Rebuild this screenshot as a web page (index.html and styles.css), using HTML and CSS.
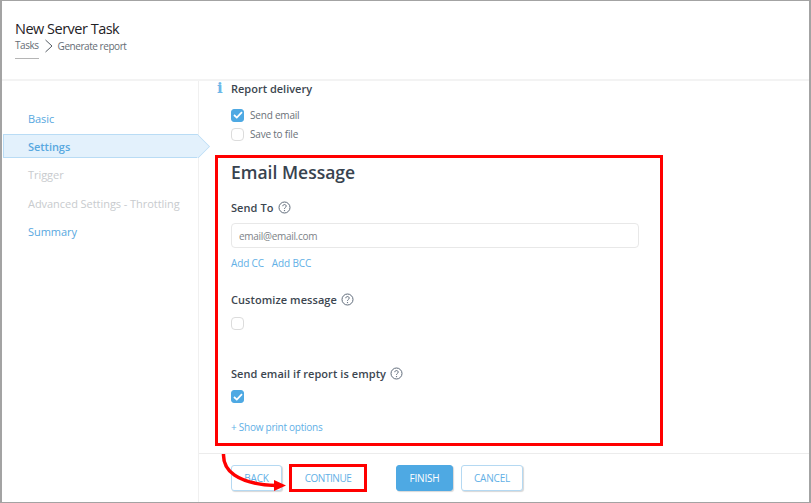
FILE: index.html
```html
<!DOCTYPE html>
<html lang="en">
<head>
  <meta charset="UTF-8" />
  <title>New Server Task</title>
  <link rel="stylesheet" href="styles.css">
</head>
<body>
  <div class="window">
    <header class="header">
      <h1>New Server Task</h1>
      <div class="crumbs">
        <span class="crumb-link">Tasks</span>
        <svg class="crumb-sep" width="10" height="14" viewBox="0 0 10 14" fill="none"><path d="M1.5 1 L8 7 L1.5 13" stroke="#555c63" stroke-width="1"/></svg>
        <span>Generate report</span>
      </div>
    </header>

    <div class="body">
      <nav class="steps">
        <a class="step">Basic</a>
        <a class="step active">Settings</a>
        <a class="step off">Trigger</a>
        <a class="step off">Advanced Settings - Throttling</a>
        <a class="step">Summary</a>
      </nav>

      <div class="panel">
        <main class="content">
          <div class="delivery-title">
            <span class="info">i</span>
            <span>Report delivery</span>
          </div>
          <label class="check-row first">
            <span class="check on"><svg width="10" height="8" viewBox="0 0 10 8" fill="none"><path d="M1 4 L3.8 6.6 L9 1.2" stroke="#fff" stroke-width="1.8"/></svg></span>
            Send email
          </label>
          <label class="check-row">
            <span class="check"></span>
            Save to file
          </label>

          <h2>Email Message</h2>

          <div class="field-label send-to">Send To <svg class="help" width="13" height="13" viewBox="0 0 13 13" fill="none"><circle cx="6.5" cy="6.5" r="5.5" stroke="#5f6b7a"/><path d="M4.8 5.2 C4.8 3 8.2 3 8.2 5.2 C8.2 6.4 6.5 6.4 6.5 7.8" stroke="#5f6b7a"/><circle cx="6.5" cy="9.6" r=".7" fill="#5f6b7a"/></svg></div>
          <input class="text-input" type="text" placeholder="email@email.com">
          <div class="add-links"><a>Add CC</a><a>Add BCC</a></div>

          <div class="field-label customize">Customize message <svg class="help" width="13" height="13" viewBox="0 0 13 13" fill="none"><circle cx="6.5" cy="6.5" r="5.5" stroke="#5f6b7a"/><path d="M4.8 5.2 C4.8 3 8.2 3 8.2 5.2 C8.2 6.4 6.5 6.4 6.5 7.8" stroke="#5f6b7a"/><circle cx="6.5" cy="9.6" r=".7" fill="#5f6b7a"/></svg></div>
          <span class="check solo"></span>

          <div class="field-label empty">Send email if report is empty <svg class="help" width="13" height="13" viewBox="0 0 13 13" fill="none"><circle cx="6.5" cy="6.5" r="5.5" stroke="#5f6b7a"/><path d="M4.8 5.2 C4.8 3 8.2 3 8.2 5.2 C8.2 6.4 6.5 6.4 6.5 7.8" stroke="#5f6b7a"/><circle cx="6.5" cy="9.6" r=".7" fill="#5f6b7a"/></svg></div>
          <span class="check on solo"><svg width="10" height="8" viewBox="0 0 10 8" fill="none"><path d="M1 4 L3.8 6.6 L9 1.2" stroke="#fff" stroke-width="1.8"/></svg></span>

          <a class="print-link">+ Show print options</a>
        </main>

        <footer class="footer">
          <button class="btn back">BACK</button>
          <button class="btn continue">CONTINUE</button>
          <button class="btn primary">FINISH</button>
          <button class="btn">CANCEL</button>
        </footer>
      </div>
    </div>
  </div>

  <!-- red annotations on top of the screenshot -->
  <div class="mark mark-form"></div>
  <div class="mark mark-continue"></div>
  <svg class="mark-arrow" width="70" height="42" viewBox="0 0 70 42" fill="none">
    <path d="M3.5 2 C3 18 16 32 56 33.5" stroke="#f00" stroke-width="3.5"/>
    <path d="M54 28 L66 33.5 L54 39 Z" fill="#f00"/>
  </svg>
</body>
</html>
```

FILE: styles.css
```css
* {
  box-sizing: border-box;
  margin: 0;
  padding: 0;
}
body {
  width: 811px;
  height: 503px;
  background: #fff;
  font-family: 'Open Sans', 'Noto Sans', sans-serif;
  color: #3f4a56;
  overflow: hidden;
  position: relative;
}
.window {
  width: 811px;
  height: 503px;
  border: 1px solid #a3a3a3;
  border-left-width: 2px;
  border-right-width: 2px;
  display: flex;
  flex-direction: column;
}
.header {
  height: 80px;
  padding: 18px 0 0 13px;
  border-bottom: 2px solid #f3f3f3;
}
.header h1 {
  font-size: 14.5px;
  font-weight: 400;
  line-height: 20px;
  letter-spacing: -0.5px;
  color: #1f2226;
}
.crumbs {
  display: flex;
  align-items: center;
  margin-top: -1px;
  font-size: 10px;
  line-height: 14px;
  letter-spacing: -0.45px;
  color: #666d75;
}
.crumb-link {
  padding-bottom: 6px;
  margin-bottom: -6px;
  border-bottom: 1px solid #b5b5b5;
  position: relative;
}
.crumb-sep {
  margin: 0 4px 0 5px;
}
.body {
  flex: 1;
  display: flex;
  min-height: 0;
}
.steps {
  width: 197px;
  padding-top: 25px;
  border-right: 1px solid #f0f0f0;
  flex-shrink: 0;
  position: relative;
}
.step {
  display: flex;
  align-items: center;
  height: 24px;
  margin-bottom: 4.4px;
  padding-left: 26px;
  font-size: 11px;
  letter-spacing: -0.05px;
  color: #58a8e0;
}
.step.off {
  color: #c8cbce;
}
.step.active {
  margin-left: 1px;
  padding-left: 24px;
  font-weight: 600;
  background: #e3f1fc;
  border: 1px solid #b9dcf5;
  border-right: 0;
  position: relative;
}
.step.active::before,
.step.active::after {
  content: "";
  position: absolute;
  top: -1px;
  width: 12px;
  height: 24px;
  clip-path: polygon(0 0, 100% 50%, 0 100%);
}
.step.active::before {
  right: -12px;
  background: #b9dcf5;
}
.step.active::after {
  right: -11px;
  background: #e3f1fc;
}
.panel {
  flex: 1;
  display: flex;
  flex-direction: column;
  min-width: 0;
}
.content {
  flex: 1;
  padding: 0 0 0 32px;
  min-height: 0;
}
.delivery-title {
  display: flex;
  align-items: center;
  height: 16px;
  margin-top: -1px;
  font-size: 11px;
  font-weight: 600;
  color: #3c4650;
  position: relative;
}
.info {
  position: absolute;
  left: -14px;
  font-family: 'DejaVu Serif', serif;
  font-size: 15px;
  font-weight: 700;
  color: #6db7e8;
}
.check-row {
  display: flex;
  align-items: center;
  gap: 6px;
  height: 14px;
  margin-top: 5px;
  font-size: 10px;
  letter-spacing: -0.2px;
  color: #6a7178;
}
.check-row.first {
  margin-top: 12px;
}
.check {
  display: flex;
  align-items: center;
  justify-content: center;
  width: 13px;
  height: 13px;
  border: 1px solid #dcdcdc;
  border-radius: 4px;
  background: #fff;
}
.check.on {
  background: #4ea9e3;
  border-color: #4ea9e3;
  border-radius: 3px;
}
.check.solo {
  margin-top: 10px;
}
h2 {
  font-size: 17.5px;
  font-weight: 600;
  line-height: 24px;
  margin-top: 19px;
  color: #38434f;
}
.field-label {
  display: flex;
  align-items: center;
  gap: 4px;
  height: 16px;
  font-size: 11px;
  font-weight: 600;
  letter-spacing: 0.07px;
  color: #3c4650;
}
.send-to {
  margin-top: 15px;
}
.customize {
  margin-top: 20px;
}
.empty {
  margin-top: 35px;
}
.empty + .check.solo {
  margin-top: 9px;
}
.text-input {
  display: block;
  width: 408px;
  height: 25px;
  margin-top: 8px;
  padding: 0 7px;
  border: 1px solid #e8e8e8;
  border-radius: 4px;
  font-family: inherit;
  font-size: 10px;
  letter-spacing: -0.3px;
}
.text-input::placeholder {
  color: #7d8388;
  opacity: 1;
}
.add-links {
  display: flex;
  gap: 8px;
  margin-top: 8px;
  line-height: 15px;
  font-size: 10px;
  letter-spacing: -0.15px;
  color: #62b0e6;
}
.print-link {
  display: block;
  margin-top: 17px;
  line-height: 15px;
  font-size: 10px;
  letter-spacing: -0.25px;
  color: #62b0e6;
}
.footer {
  height: 49px;
  flex-shrink: 0;
  border-top: 1px solid #ececec;
  display: flex;
  align-items: flex-start;
  padding: 11px 0 0 32px;
}
.btn {
  height: 26px;
  padding: 0;
  font-family: inherit;
  font-size: 10px;
  letter-spacing: -0.2px;
  color: #62b0e6;
  background: #fff;
  border: 1px solid #b5d9f2;
  border-radius: 3px;
  box-shadow: 1px 1px 1px #d8d8d8;
  width: 62px;
}
.back {
  width: 51px;
}
.continue {
  width: 76px;
  margin-left: 8px;
  border: 0;
  box-shadow: none;
  letter-spacing: -0.45px;
}
.primary {
  width: 57px;
  margin-left: 30px;
  margin-right: 8px;
  background: #4ea9e3;
  border-color: #4ea9e3;
  color: #fff;
}
.help {
  flex-shrink: 0;
}
.mark {
  position: absolute;
  border: 3px solid #f00;
}
.mark-form {
  left: 215px;
  top: 155px;
  width: 448px;
  height: 291px;
}
.mark-continue {
  left: 289px;
  top: 464px;
  width: 78px;
  height: 28px;
}
.mark-arrow {
  position: absolute;
  left: 220px;
  top: 452px;
}
```
